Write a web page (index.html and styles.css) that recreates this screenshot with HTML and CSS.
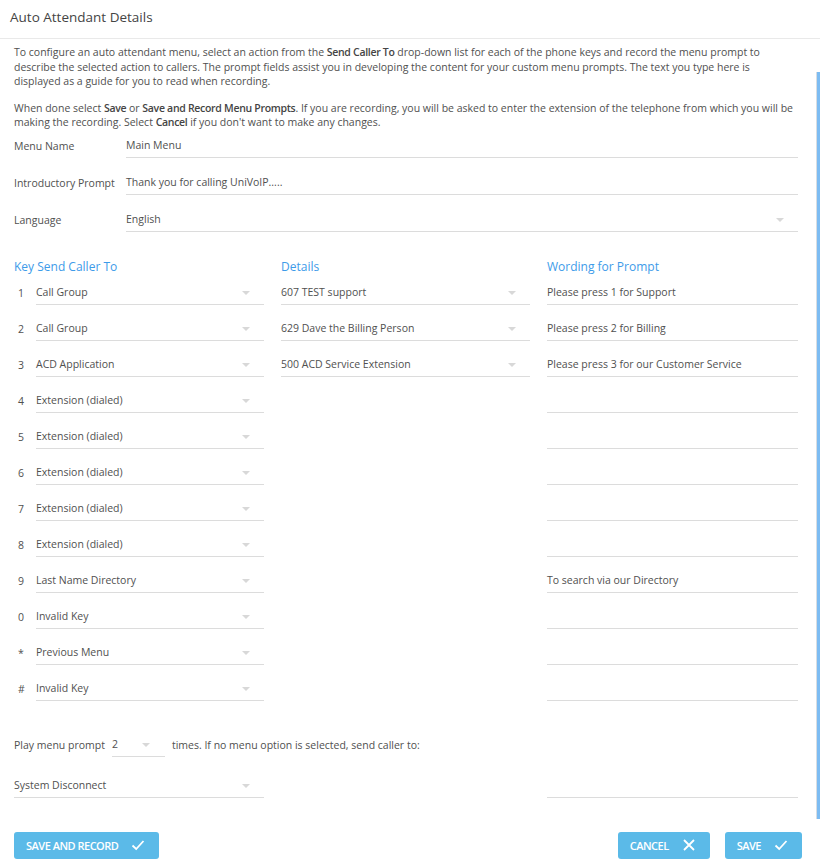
FILE: index.html
```html
<!DOCTYPE html>
<html lang="en">
<head>
    <meta charset="UTF-8">
    <meta name="viewport" content="width=device-width, initial-scale=1.0">
    <title>Auto Attendant Details</title>
    <link rel="stylesheet" href="styles.css">
</head>
<body>
    <div class="dialog">
        <div class="dialog-header">
            <h1>Auto Attendant Details</h1>
        </div>

        <div class="dialog-body">
            <p class="intro">To configure an auto attendant menu, select an action from the <b>Send Caller To</b> drop-down list for each of the phone keys and record the menu prompt to describe the selected action to callers. The prompt fields assist you in developing the content for your custom menu prompts. The text you type here is displayed as a guide for you to read when recording.</p>
            <p class="intro">When done select <b>Save</b> or <b>Save and Record Menu Prompts</b>. If you are recording, you will be asked to enter the extension of the telephone from which you will be making the recording. Select <b>Cancel</b> if you don't want to make any changes.</p>

            <div class="form-row">
                <label>Menu Name</label>
                <div class="field">Main Menu</div>
            </div>
            <div class="form-row">
                <label>Introductory Prompt</label>
                <div class="field">Thank you for calling UniVoIP.....</div>
            </div>
            <div class="form-row">
                <label>Language</label>
                <div class="field select">English</div>
            </div>

            <div class="keys">
                <div class="col-title">Key Send Caller To</div>
                <div class="col-title">Details</div>
                <div class="col-title">Wording for Prompt</div>
                <!-- Key rows are rendered from keyRows below -->
            </div>

            <div class="repeat-line">
                <span>Play menu prompt</span>
                <div class="field select small">2</div>
                <span>times. If no menu option is selected, send caller to:</span>
            </div>

            <div class="fallback">
                <div class="field select">System Disconnect</div>
                <div></div>
                <div class="field"></div>
            </div>
        </div>

        <div class="dialog-footer">
            <button class="btn">SAVE AND RECORD
                <svg class="icon" viewBox="0 0 14 14"><path d="M1.5 7.5 L5.2 11 L12.5 3" /></svg>
            </button>
            <div class="btn-group">
                <button class="btn">CANCEL
                    <svg class="icon" viewBox="0 0 14 14"><path d="M2 2 L12 12 M12 2 L2 12" /></svg>
                </button>
                <button class="btn">SAVE
                    <svg class="icon" viewBox="0 0 14 14"><path d="M1.5 7.5 L5.2 11 L12.5 3" /></svg>
                </button>
            </div>
        </div>

        <div class="scroll-thumb"></div>
    </div>

    <script>
        const keyRows = [
            { key: "1", action: "Call Group", details: "607 TEST support", prompt: "Please press 1 for Support" },
            { key: "2", action: "Call Group", details: "629 Dave the Billing Person", prompt: "Please press 2 for Billing" },
            { key: "3", action: "ACD Application", details: "500 ACD Service Extension", prompt: "Please press 3 for our Customer Service" },
            { key: "4", action: "Extension (dialed)", details: null, prompt: "" },
            { key: "5", action: "Extension (dialed)", details: null, prompt: "" },
            { key: "6", action: "Extension (dialed)", details: null, prompt: "" },
            { key: "7", action: "Extension (dialed)", details: null, prompt: "" },
            { key: "8", action: "Extension (dialed)", details: null, prompt: "" },
            { key: "9", action: "Last Name Directory", details: null, prompt: "To search via our Directory" },
            { key: "0", action: "Invalid Key", details: null, prompt: "" },
            { key: "*", action: "Previous Menu", details: null, prompt: "" },
            { key: "#", action: "Invalid Key", details: null, prompt: "" }
        ];

        function renderKeys() {
            const grid = document.querySelector(".keys");
            keyRows.forEach(row => {
                const first = document.createElement("div");
                first.className = "key-cell";
                first.innerHTML = `<span class="key">${row.key}</span><div class="field select">${row.action}</div>`;
                grid.appendChild(first);

                const second = document.createElement("div");
                if (row.details !== null) {
                    second.className = "field select";
                    second.textContent = row.details;
                }
                grid.appendChild(second);

                const third = document.createElement("div");
                third.className = "field";
                third.textContent = row.prompt;
                grid.appendChild(third);
            });
        }

        renderKeys();
    </script>
</body>
</html>
```

FILE: styles.css
```css
body {
    font-family: "Open Sans", Arial, sans-serif;
    font-size: 10.5px;
    color: #505050;
    margin: 0;
    padding: 0;
    background-color: #fff;
}

.dialog {
    position: relative;
    width: 820px;
    height: 868px;
    overflow: hidden;
}

.dialog-header {
    height: 38px;
    border-bottom: 1px solid #e9e9e9;
    display: flex;
    align-items: center;
    padding-left: 10px;
}

.dialog-header h1 {
    font-size: 13.5px;
    font-weight: normal;
    color: #444;
    margin: 0 0 4px 0;
}

.dialog-body {
    padding: 6px 20px 0 14px;
}

.intro {
    margin: 0 3px 12px 0;
    line-height: 14.5px;
}

.intro:last-of-type {
    margin-bottom: 4px;
}

.intro b {
    font-weight: 600;
    letter-spacing: -0.3px;
    color: #444;
}

.form-row {
    display: flex;
    align-items: flex-end;
    margin-bottom: 13px;
    margin-right: 2px;
}

.form-row label {
    width: 112px;
    flex-shrink: 0;
    line-height: 23px;
}

.form-row .field {
    flex: 1;
}

.field {
    position: relative;
    height: 23px;
    line-height: 22px;
    border-bottom: 1px solid #dcdcdc;
    white-space: nowrap;
    color: #505050;
}

.field.select::after {
    content: "";
    position: absolute;
    right: 14px;
    top: 10px;
    border-left: 4px solid transparent;
    border-right: 4px solid transparent;
    border-top: 4px solid #d8d8d8;
}

.keys {
    display: grid;
    grid-template-columns: 250px 249px 251px;
    column-gap: 17px;
    row-gap: 12px;
    margin-top: 28px;
}

.col-title {
    color: #3d9be9;
    font-size: 12px;
    line-height: 14px;
    margin-bottom: -5px;
}

.key-cell {
    display: flex;
    align-items: flex-end;
}

.key {
    width: 22px;
    flex-shrink: 0;
    padding-left: 4px;
    box-sizing: border-box;
    line-height: 23px;
}

.key-cell .field {
    flex: 1;
}

.repeat-line {
    display: flex;
    align-items: flex-end;
    margin-top: 32px;
}

.repeat-line span {
    line-height: 22px;
    margin-bottom: 1px;
}

.field.small {
    width: 53px;
    margin: 0 7px 0 7px;
}

.field.small::after {
    right: 15px;
}

.fallback {
    display: grid;
    grid-template-columns: 250px 249px 251px;
    column-gap: 17px;
    margin-top: 17px;
}

.dialog-footer {
    display: flex;
    justify-content: space-between;
    padding: 34px 18px 0 14px;
}

.btn-group {
    display: flex;
    gap: 15px;
}

.btn {
    height: 27px;
    background-color: #5bbae8;
    color: #fff;
    border: none;
    border-radius: 3px;
    padding: 0 14px 0 12px;
    font-family: "Open Sans", Arial, sans-serif;
    font-size: 11px;
    font-weight: 600;
    letter-spacing: -0.5px;
    display: flex;
    align-items: center;
    gap: 13px;
    cursor: pointer;
}

.btn .icon {
    width: 14px;
    height: 14px;
    fill: none;
    stroke: #fff;
    stroke-width: 1.8;
}

.scroll-thumb {
    position: absolute;
    top: 72px;
    right: 0;
    width: 3px;
    height: 747px;
    background-color: #7dbcf2;
    border-left: 1px solid #d8dde2;
}
```
